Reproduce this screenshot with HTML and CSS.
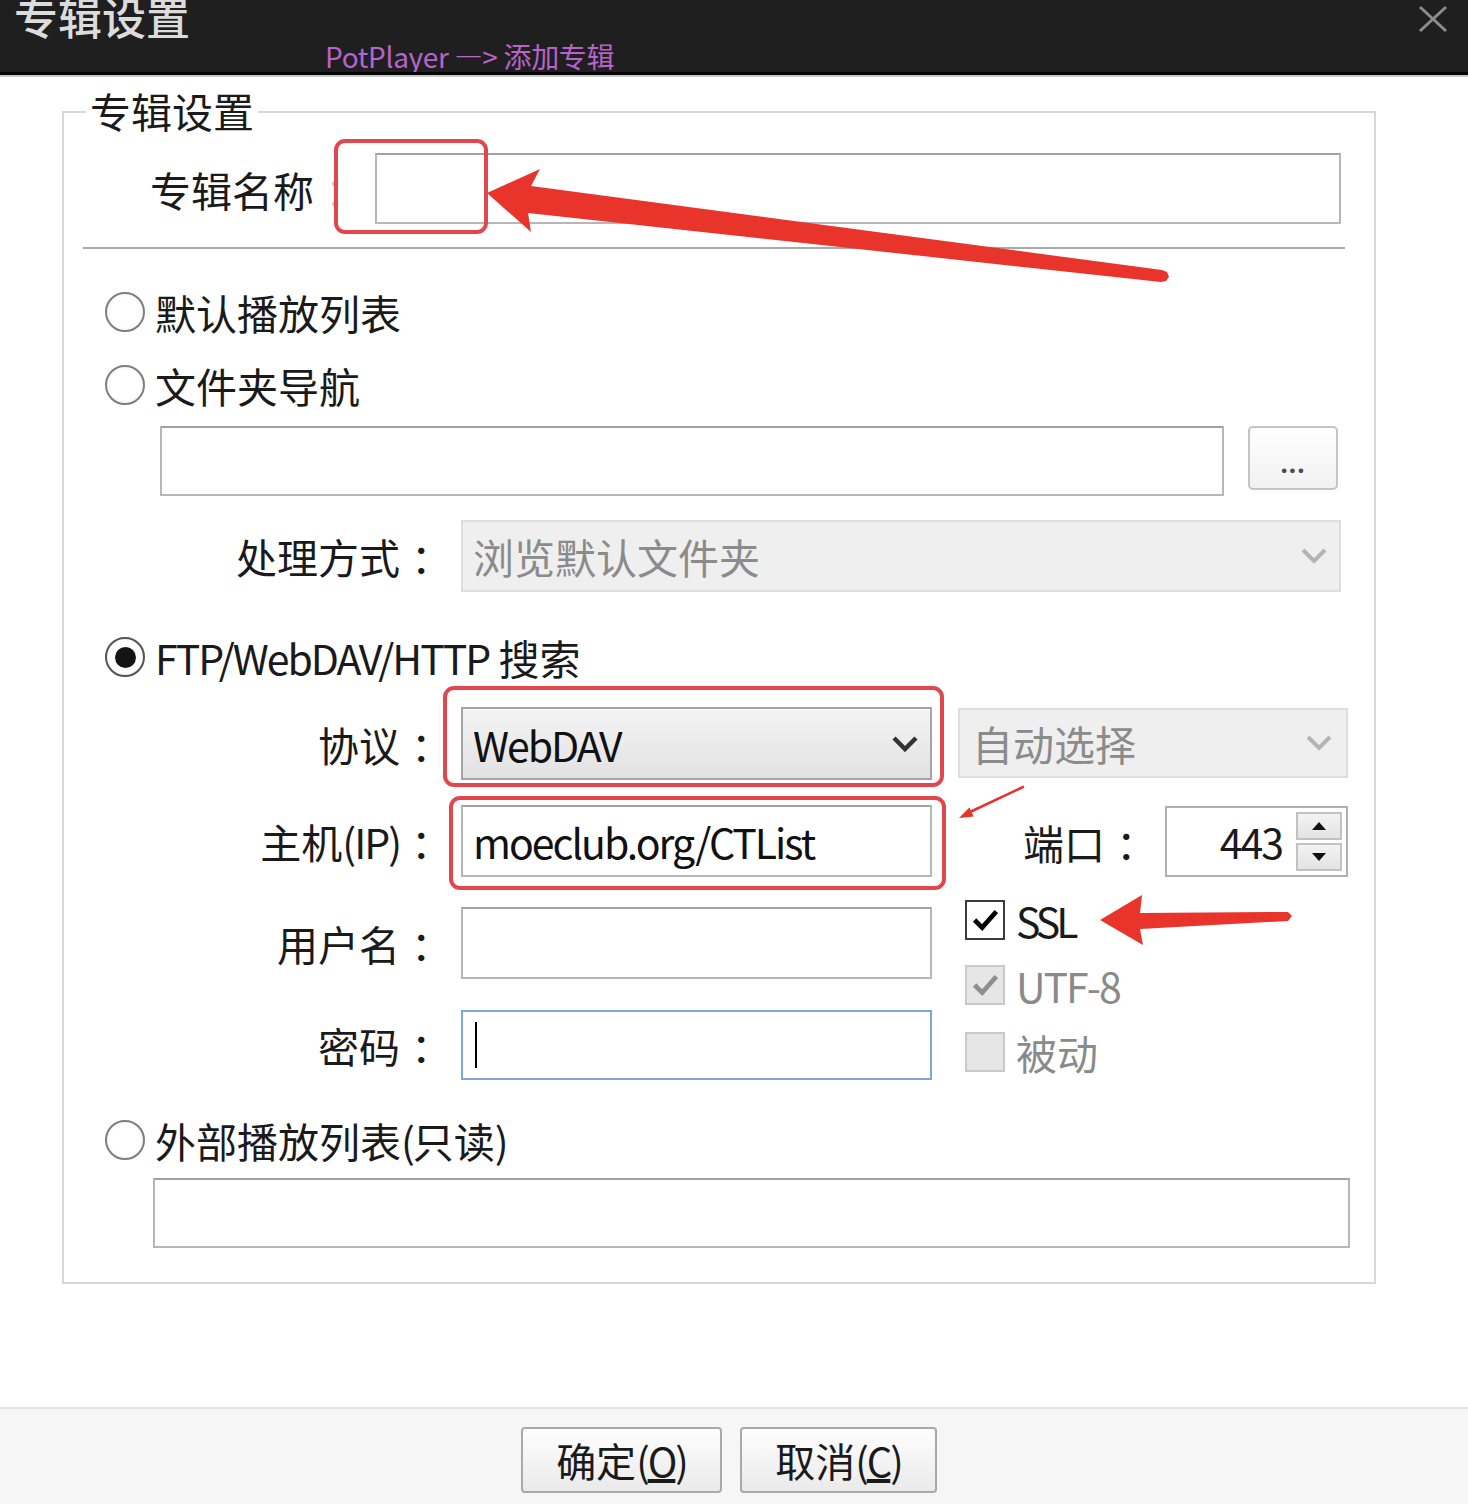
FILE: index.html
```html
<!DOCTYPE html>
<html lang="zh-CN">
<head>
<meta charset="utf-8">
<title>专辑设置</title>
<link rel="stylesheet" href="styles.css">
</head>
<body>
<div class="window">
  <header class="titlebar">
    <span class="title">专辑设置</span>
    <span class="caption">PotPlayer —&gt; 添加专辑</span>
    <svg class="close" viewBox="0 0 30 28"><path d="M2 2 L28 26 M28 2 L2 26" stroke="#8c8c8c" stroke-width="3" fill="none"/></svg>
  </header>
  <main class="main">
    <section class="group">
      <div class="group-title">专辑设置</div>
      <div class="name-row">
        <span class="name-label">专辑名称<span class="colon dim">：</span></span>
        <div class="input name-input"></div>
      </div>
      <div class="sep"></div>
      <div class="radio-row r1"><span class="radio"></span>默认播放列表</div>
      <div class="radio-row r2"><span class="radio"></span>文件夹导航</div>
      <div class="folder-row">
        <div class="input folder-input"></div>
        <button class="browse">...</button>
      </div>
      <div class="frow handle-row">
        <span class="flabel">处理方式<span class="colon">：</span></span>
        <div class="select disabled"><span>浏览默认文件夹</span><svg class="chev" viewBox="0 0 26 16"><polyline points="2,2 13,13 24,2" fill="none" stroke="#b4b4b4" stroke-width="4"/></svg></div>
      </div>
      <div class="radio-row r3"><span class="radio checked"></span><span class="lat">FTP/WebDAV/HTTP</span>&nbsp;搜索</div>
      <div class="net">
        <div class="net-left">
          <div class="frow f-proto">
            <span class="flabel">协议<span class="colon">：</span></span>
            <div class="select active control"><span class="lat">WebDAV</span><svg class="chev" viewBox="0 0 26 16"><polyline points="2,2 13,13 24,2" fill="none" stroke="#333" stroke-width="4.5"/></svg></div>
          </div>
          <div class="frow f-host">
            <span class="flabel">主机<span class="lat">(IP)</span><span class="colon">：</span></span>
            <div class="input control text-input"><span class="lat">moeclub.org/CTList</span></div>
          </div>
          <div class="frow f-user">
            <span class="flabel">用户名<span class="colon">：</span></span>
            <div class="input control"></div>
          </div>
          <div class="frow f-pass">
            <span class="flabel">密码<span class="colon">：</span></span>
            <div class="input control focused"><span class="caret"></span></div>
          </div>
        </div>
        <div class="net-right">
          <div class="select disabled auto-select"><span>自动选择</span><svg class="chev" viewBox="0 0 26 16"><polyline points="2,2 13,13 24,2" fill="none" stroke="#b4b4b4" stroke-width="4"/></svg></div>
          <div class="port-row">
            <span class="plabel">端口<span class="colon">：</span></span>
            <div class="spinner">
              <span class="spin-value lat">443</span>
              <span class="spin-btns">
                <span class="spin-btn"><svg viewBox="0 0 14 8"><polygon points="7,0 14,8 0,8" fill="#111"/></svg></span>
                <span class="spin-btn"><svg viewBox="0 0 14 8"><polygon points="0,0 14,0 7,8" fill="#111"/></svg></span>
              </span>
            </div>
          </div>
          <div class="checks">
            <div class="check"><span class="box on"><svg viewBox="0 0 36 36"><path d="M7 18 L15 26 L30 9" fill="none" stroke="#000" stroke-width="5"/></svg></span><span class="lat tight">SSL</span></div>
            <div class="check dis c2"><span class="box grey"><svg viewBox="0 0 36 36"><path d="M7 18 L15 26 L30 9" fill="none" stroke="#8e8e8e" stroke-width="5"/></svg></span><span class="lat">UTF-8</span></div>
            <div class="check dis c3"><span class="box grey"></span>被动</div>
          </div>
        </div>
      </div>
      <div class="radio-row r4"><span class="radio"></span>外部播放列表<span class="lat">(</span>只读<span class="lat">)</span></div>
      <div class="input ext-input"></div>
    </section>
  </main>
  <footer class="footer">
    <button class="btn ok">确定<span class="lat">(<u>O</u>)</span></button>
    <button class="btn cancel">取消<span class="lat">(<u>C</u>)</span></button>
  </footer>
</div>
<svg class="annot" viewBox="0 0 1468 1504">
  <g fill="none" stroke="#e2474d" stroke-width="4">
    <rect x="336" y="141" width="150" height="91" rx="9"/>
    <rect x="445" y="688" width="497" height="97" rx="9"/>
    <rect x="451" y="798" width="493" height="90" rx="9"/>
  </g>
  <g fill="#e8342b">
    <polygon points="487,193 540,169 531,186 1162,270 1167,272 1169,277 1166,281 1161,282 528,213 531,232"/>
    <polygon points="1100,920 1142,895 1140,913 1288,912 1292,916 1288,921 1140,929 1143,945"/>
    <polygon points="959,818 969.4,807.4 973.8,816.4"/>
  </g>
  <line x1="1023" y1="787" x2="970" y2="812" stroke="#e8342b" stroke-width="2.5" stroke-linecap="round"/>
</svg>
</body>
</html>
```
FILE: styles.css
```css
* { box-sizing: border-box; }
html, body { margin: 0; padding: 0; }
body {
  width: 1468px;
  height: 1504px;
  background: #fff;
  font-family: "Noto Sans CJK SC", "Noto Sans", sans-serif;
  color: #1a1a1a;
  position: relative;
  overflow: hidden;
}
.window { display: flex; flex-direction: column; height: 1504px; }

.titlebar {
  flex: none;
  height: 75px;
  background: #1f1f1f;
  border-bottom: 3px solid #060606;
  box-shadow: 0 2px 0 #c9c9c9;
  display: flex;
  align-items: flex-start;
  overflow: hidden;
}
.title {
  font-size: 44px;
  line-height: 44px;
  margin: -6px 0 0 14px;
  color: #dcdcdc;
  font-weight: 500;
  white-space: nowrap;
}
.caption {
  font-size: 28px;
  line-height: 28px;
  margin: 42px 0 0 135px;
  color: #b863cc;
  white-space: nowrap;
  letter-spacing: -0.3px;
}
.close { width: 30px; height: 28px; margin: 5px 20px 0 auto; flex: none; }

.main { flex: 1; padding-top: 36px; }
.group {
  margin-left: 62px;
  width: 1314px;
  border: 2px solid #d7d7d7;
  padding: 0 0 34px 0;
}
.group-title {
  margin: -27px 0 0 22px;
  padding: 0 4px;
  background: #fff;
  width: fit-content;
  font-size: 41px;
  line-height: 48px;
}

.lat { letter-spacing: -2px; }
.lat.tight { letter-spacing: -4px; }
.colon {
  display: inline-block;
  width: 40px;
  padding-left: 11px;
  text-align: left;
  white-space: nowrap;
}
.dim { color: #c4c4c4; }

.input {
  background: #fff;
  border: 2px solid #b7b7b7;
  border-top-color: #a2a2a2;
}
.name-row {
  display: flex;
  align-items: center;
  margin-top: 19px;
  height: 71px;
  padding: 0 33px 0 86px;
}
.name-label { width: 205px; flex: none; font-size: 41px; white-space: nowrap; }
.name-input { flex: 1; height: 71px; margin-left: 20px; }

.sep { margin: 23px 29px 0 19px; height: 2px; background: #a9a9a9; }

.radio-row {
  display: flex;
  align-items: center;
  height: 48px;
  padding-left: 41px;
  font-size: 41px;
  line-height: 48px;
  white-space: nowrap;
}
.radio {
  flex: none;
  width: 40px;
  height: 40px;
  border-radius: 50%;
  border: 2px solid #7e7e7e;
  margin-right: 10px;
  background: radial-gradient(circle, #fff 55%, #ececec 100%);
  display: flex;
  align-items: center;
  justify-content: center;
}
.radio.checked { border-color: #555; }
.radio.checked::after {
  content: "";
  width: 21px;
  height: 21px;
  border-radius: 50%;
  background: #141414;
}
.r1 { margin-top: 39px; }
.r2 { margin-top: 25px; }
.r3 { margin-top: 41px; }
.r4 { margin-top: 36px; }

.folder-row {
  display: flex;
  align-items: flex-start;
  margin-top: 17px;
  padding: 0 36px 0 96px;
  gap: 24px;
}
.folder-input { flex: 1; height: 70px; }
.browse {
  width: 90px;
  height: 64px;
  border: 2px solid #c4c4c4;
  border-radius: 5px;
  background: linear-gradient(#ffffff, #f1f1f1);
  font-family: "Noto Sans", sans-serif;
  font-size: 26px;
  font-weight: 700;
  color: #4a4a55;
  padding: 10px 0 0 0;
  letter-spacing: 1px;
}

.frow { display: flex; align-items: center; }
.flabel {
  width: 376px;
  flex: none;
  text-align: right;
  margin-right: 21px;
  font-size: 41px;
  white-space: nowrap;
}
.handle-row { margin-top: 24px; height: 72px; padding-right: 33px; }
.handle-row .select { flex: 1; height: 72px; }

.select {
  display: flex;
  align-items: center;
  justify-content: space-between;
  padding: 0 12px 0 10px;
  font-size: 41px;
  white-space: nowrap;
}
.select.disabled { background: #efefef; border: 2px solid #dedede; color: #8b8b8b; }
.select.active { background: linear-gradient(#f4f4f4, #e2e2e2); border: 2px solid #a4a4a4; color: #111; }
.chev { width: 26px; height: 16px; flex: none; }

.net { display: flex; align-items: flex-start; margin-top: 26px; }
.net-left { display: flex; flex-direction: column; }
.control { width: 471px; height: 100%; }
.f-proto { height: 73px; }
.f-host { height: 72px; margin-top: 25px; }
.f-user { height: 72px; margin-top: 30px; }
.f-pass { height: 70px; margin-top: 31px; }
.text-input {
  display: flex;
  align-items: center;
  padding-left: 10px;
  font-size: 41px;
  color: #111;
  white-space: nowrap;
}
.focused { border-color: #7aa7da; display: flex; align-items: center; }
.caret { width: 2px; height: 46px; background: #000; margin-left: 12px; }

.net-right { width: 390px; margin-left: 26px; display: flex; flex-direction: column; }
.auto-select { margin-top: 1px; height: 70px; padding-left: 12px; padding-right: 14px; }
.port-row {
  margin-top: 28px;
  height: 71px;
  display: flex;
  align-items: center;
  justify-content: flex-end;
  gap: 20px;
}
.plabel { font-size: 41px; white-space: nowrap; }
.spinner {
  width: 183px;
  height: 71px;
  border: 2px solid #b0b0b0;
  display: flex;
  padding: 4px;
}
.spin-value { flex: 1; text-align: right; font-size: 41px; line-height: 59px; padding-right: 14px; color: #1a1a1a; }
.spin-btns { width: 46px; display: flex; flex-direction: column; gap: 3px; }
.spin-btn {
  flex: 1;
  border: 2px solid #c2c2c2;
  background: linear-gradient(#f3f3f3, #e3e3e3);
  display: flex;
  align-items: center;
  justify-content: center;
}
.spin-btn svg { width: 14px; height: 8px; }

.checks { margin-top: 23px; padding-left: 7px; display: flex; flex-direction: column; }
.check {
  display: flex;
  align-items: center;
  height: 40px;
  gap: 11px;
  font-size: 41px;
  line-height: 40px;
  white-space: nowrap;
}
.check.dis { color: #8a8a8a; }
.c2 { margin-top: 25px; }
.c3 { margin-top: 27px; }
.box {
  flex: none;
  width: 40px;
  height: 40px;
  border: 2px solid #3a3a3a;
  background: #fff;
  display: flex;
  align-items: center;
  justify-content: center;
}
.box svg { width: 34px; height: 34px; }
.box.grey { border-color: #c9c9c9; background: #e6e6e6; }

.ext-input { margin: 14px 24px 0 89px; height: 70px; }

.footer {
  flex: none;
  height: 97px;
  border-top: 2px solid #e2e2e2;
  background: #f6f6f6;
  display: flex;
  justify-content: center;
  align-items: flex-start;
  padding: 18px 10px 0 0;
  gap: 18px;
}
.btn {
  height: 66px;
  border: 2px solid #a9a9a9;
  border-radius: 4px;
  background: linear-gradient(#fefefe, #eaeaea);
  font-family: "Noto Sans CJK SC", sans-serif;
  font-size: 40px;
  line-height: 60px;
  color: #1a1a1a;
  padding: 0;
}
.btn.ok { width: 201px; }
.btn.cancel { width: 197px; }

.annot {
  position: absolute;
  left: 0;
  top: 0;
  width: 1468px;
  height: 1504px;
  pointer-events: none;
}
```
